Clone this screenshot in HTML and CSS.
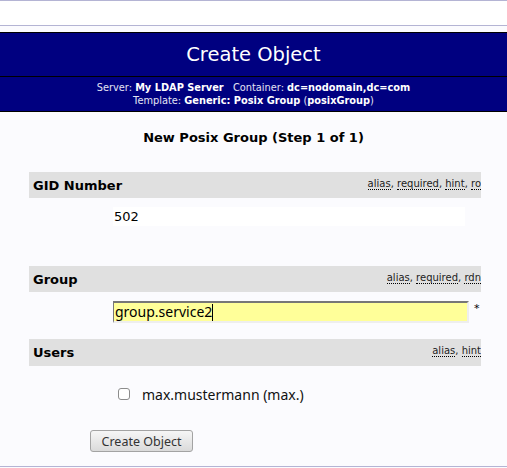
FILE: index.html
```html
<!DOCTYPE html>
<html>
<head>
<meta charset="utf-8">
<link rel="stylesheet" href="styles.css">
</head>
<body>
<div class="topbar"></div>
<div class="header">
  <div class="title">Create Object</div>
  <div class="info">
    <div>Server: <b>My LDAP Server</b>&nbsp;&nbsp; Container: <b>dc=nodomain,dc=com</b></div>
    <div>Template: <b>Generic: Posix Group</b> (<b>posixGroup</b>)</div>
  </div>
</div>
<div class="content">
  <div class="step">New Posix Group (Step 1 of 1)</div>
  <div class="attrs">
    <div class="bar">
      <span class="name">GID Number</span>
      <span class="hints"><abbr>alias</abbr>, <abbr>required</abbr>, <abbr>hint</abbr>, <abbr>ro</abbr></span>
    </div>
    <div class="val val-gid"><input class="ro-input" type="text" value="502" readonly></div>

    <div class="bar bar-group">
      <span class="name">Group</span>
      <span class="hints"><abbr>alias</abbr>, <abbr>required</abbr>, <abbr>rdn</abbr></span>
    </div>
    <div class="val val-group"><span class="req-input">group.service2<span class="caret"></span></span><span class="star">*</span></div>

    <div class="bar bar-users">
      <span class="name">Users</span>
      <span class="hints"><abbr>alias</abbr>, <abbr>hint</abbr></span>
    </div>
    <div class="val val-users"><span class="check"></span><span class="user">max.mustermann (max.)</span></div>

    <div class="submit"><button class="btn">Create Object</button></div>
  </div>
</div>
<div class="footer"></div>
</body>
</html>
```
FILE: styles.css
```css
html, body {
  margin: 0;
  padding: 0;
}
body {
  background: #fbfbfe;
  font-family: "DejaVu Sans", sans-serif;
  color: #000;
  height: 468px;
  overflow: hidden;
}
.topbar {
  height: 24px;
  background: #fff;
  border-top: 1px solid #b4b4d4;
  border-bottom: 1px solid #b4b4d4;
  margin-bottom: 6px;
}
.header {
  background: #000080;
  border-top: 1px solid #000;
  border-bottom: 1px solid #000;
  color: #fff;
  text-align: center;
}
.title {
  height: 43px;
  line-height: 44px;
  font-size: 19.5px;
  border-bottom: 1px solid #000;
}
.info {
  height: 34px;
  box-sizing: border-box;
  padding-top: 4px;
  font-size: 9.8px;
  line-height: 13px;
  color: #e4e4f4;
}
.info b {
  color: #fff;
}
.content {
  padding-top: 18px;
}
.step {
  text-align: center;
  font-weight: bold;
  font-size: 13px;
  line-height: 16px;
  height: 16px;
}
.attrs {
  margin: 26px 0 0 29px;
  width: 452px;
}
.bar {
  height: 26px;
  background: #e0e0e0;
  display: flex;
  align-items: center;
  justify-content: space-between;
  padding: 0 0 0 4px;
  overflow: hidden;
  white-space: nowrap;
}
.name {
  font-weight: bold;
  font-size: 13px;
}
.hints {
  font-size: 10px;
  color: #222;
  margin-top: -4px;
}
abbr {
  text-decoration: none;
  border-bottom: 1px dotted #000;
}
.val {
  padding-left: 84px;
  display: flex;
  align-items: center;
}
.val-gid {
  margin-top: 9px;
  height: 19px;
}
.ro-input {
  width: 352px;
  height: 19px;
  box-sizing: border-box;
  border: none;
  background: #fff;
  padding: 0 0 0 1px;
  margin: 0;
  font-family: "DejaVu Sans", sans-serif;
  font-size: 13px;
  color: #000;
  outline: none;
}
.bar-group {
  margin-top: 40px;
}
.val-group {
  margin-top: 9px;
  height: 22px;
}
.req-input {
  width: 356px;
  height: 22px;
  box-sizing: border-box;
  background: #ffff99;
  border-top: 2px solid #777;
  border-left: 1px solid #777;
  border-right: 2px solid #eee;
  border-bottom: 2px solid #eee;
  font-family: "Noto Sans", sans-serif;
  font-size: 14px;
  line-height: 18px;
  padding-left: 1px;
  display: flex;
  align-items: center;
}
.caret {
  display: inline-block;
  width: 1px;
  height: 17px;
  background: #000;
}
.star {
  font-size: 11px;
  margin-left: 5px;
  margin-top: -8px;
}
.bar-users {
  margin-top: 16px;
  height: 27px;
}
.val-users {
  height: 12px;
  margin-top: 22px;
}
.check {
  width: 12px;
  height: 12px;
  box-sizing: border-box;
  border: 1px solid #8c8c8c;
  border-radius: 3px;
  background: #fff;
  margin-left: 5px;
}
.user {
  font-family: "Noto Sans", sans-serif;
  font-size: 14px;
  margin-left: 12px;
  color: #111;
}
.submit {
  margin-top: 30px;
  padding-left: 61px;
}
.btn {
  width: 103px;
  height: 22px;
  box-sizing: border-box;
  border: 1px solid #a3a3a3;
  border-radius: 3px;
  background: linear-gradient(#f6f6f6, #dadada);
  font-family: "Noto Sans", sans-serif;
  font-size: 12.5px;
  color: #333;
  padding: 0;
  margin: 0;
}
.footer {
  position: absolute;
  left: 0;
  right: 0;
  top: 466px;
  border-top: 1px solid #b4b4d4;
}
```
